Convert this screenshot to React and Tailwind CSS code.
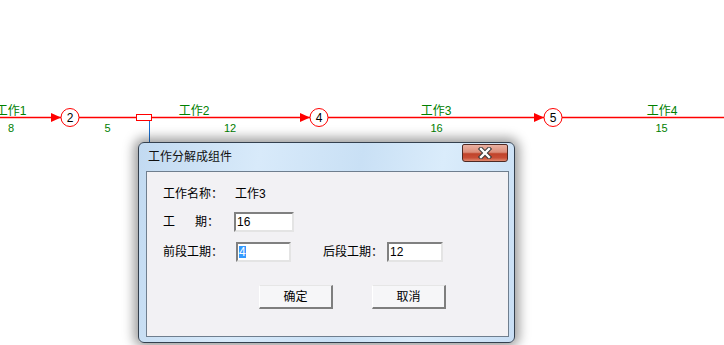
import React from "react";

const FONT = { fontFamily: '"Liberation Sans", "Noto Sans CJK SC", sans-serif' };

function Diagram() {
  const green = "#008000";
  const red = "#ff0000";
  const nodes = [
    { x: 70, n: "2" },
    { x: 319, n: "4" },
    { x: 553, n: "5" },
  ];
  const labels = [
    { x: 11, t: "工作1" },
    { x: 194, t: "工作2" },
    { x: 436, t: "工作3" },
    { x: 662, t: "工作4" },
  ];
  const nums = [
    { x: 11, d: "8" },
    { x: 107.5, d: "5" },
    { x: 230, d: "12" },
    { x: 436.5, d: "16" },
    { x: 661.5, d: "15" },
  ];
  return (
    <svg className="absolute left-0 top-0" width="724" height="345" style={FONT}>
      <line x1="0" y1="117.5" x2="724" y2="117.5" stroke={red} strokeWidth="1.6" />
      <line x1="149.5" y1="121" x2="149.5" y2="145" stroke="#1a6fd0" strokeWidth="1" />
      <rect x="136.5" y="114.5" width="15" height="6" fill="#fff" stroke={red} strokeWidth="1" />
      {nodes.map((nd) => (
        <g key={nd.n}>
          <polygon
            points={`${nd.x - 9},117.5 ${nd.x - 19},113 ${nd.x - 19},122`}
            fill={red}
          />
          <circle cx={nd.x} cy="117.5" r="9" fill="#fff" stroke={red} strokeWidth="1" />
          <text x={nd.x} y="122" textAnchor="middle" fontSize="12" fill="#000">
            {nd.n}
          </text>
        </g>
      ))}
      {labels.map((l) => (
        <text key={l.t} x={l.x} y="115" textAnchor="middle" fontSize="12" fill={green}>
          {l.t}
        </text>
      ))}
      {nums.map((n) => (
        <text key={n.d} x={n.x} y="131.5" textAnchor="middle" fontSize="11" fill={green}>
          {n.d}
        </text>
      ))}
    </svg>
  );
}

function SunkenInput({ children, w }) {
  return (
    <div
      className={`${w} h-[20px] border-2 border-t-[#808080] border-l-[#808080] border-b-[#e4e4e4] border-r-[#e4e4e4] bg-white flex items-center pl-[1px] text-[12px] text-black leading-none`}
    >
      {children}
    </div>
  );
}

function Btn({ children }) {
  return (
    <div className="w-[74px] h-[24px] border-t border-l border-t-[#e6e6e6] border-l-[#ffffff] border-b-2 border-r-2 border-b-[#7e7e7e] border-r-[#7e7e7e] bg-[#f6f6f8] flex items-center justify-center text-[12px] text-black">
      {children}
    </div>
  );
}

function Dialog() {
  return (
    <div
      className="absolute left-[138px] top-[142px] w-[377px] h-[201px] rounded-[6px] border border-[#34404e] shadow-[0_0_12px_4px_rgba(0,0,0,0.4)] bg-[linear-gradient(100deg,#c2daf1_0%,#d8eafa_30%,#c9e0f5_55%,#daecfb_75%,#c8def4_100%)] flex flex-col"
      style={FONT}
    >
      <div className="relative h-[28px] flex items-center pl-[9px] shrink-0">
        <span className="text-[12px] text-[#111]">工作分解成组件</span>
        <div className="absolute right-[6px] top-[1px] w-[46px] h-[18px] rounded-b-[3px] rounded-t-[2px] border border-[#4e2a24] bg-[linear-gradient(180deg,#eab1a2_0%,#dc8e7a_45%,#c0432a_55%,#c84e36_80%,#e08a70_100%)] flex items-center justify-center">
          <svg width="16" height="12" viewBox="0 0 16 12">
            <path d="M4 2 L12 10 M12 2 L4 10" stroke="#3a3a3a" strokeWidth="4.4" strokeLinecap="square" />
            <path d="M4 2 L12 10 M12 2 L4 10" stroke="#ffffff" strokeWidth="2.4" strokeLinecap="square" />
          </svg>
        </div>
      </div>
      <div className="ml-[7px] mr-[5px] mb-[5px] flex-1 border border-[#6f7e8e] bg-[#f2f1f4] flex flex-col pl-[16px] pt-[12px] text-[12px] text-black">
        <div className="h-[20px] flex items-center">
          <span className="w-[72px]">工作名称：</span>
          <span>工作3</span>
        </div>
        <div className="h-[20px] flex items-center mt-[8px]">
          <span className="w-[32px]">工</span>
          <span className="w-[39px]">期：</span>
          <SunkenInput w="w-[60px]">16</SunkenInput>
        </div>
        <div className="h-[20px] flex items-center mt-[10px]">
          <span className="w-[73px]">前段工期：</span>
          <SunkenInput w="w-[55px]">
            <span className="bg-[#3399ff] text-white">4</span>
          </SunkenInput>
          <span className="w-[64px] ml-[32px]">后段工期：</span>
          <SunkenInput w="w-[56px]">12</SunkenInput>
        </div>
        <div className="flex mt-[23px] ml-[96px] gap-[39px]">
          <Btn>确定</Btn>
          <Btn>取消</Btn>
        </div>
      </div>
    </div>
  );
}

export default function App() {
  return (
    <div className="relative w-[724px] h-[345px] bg-white overflow-hidden">
      <Diagram />
      <Dialog />
    </div>
  );
}
